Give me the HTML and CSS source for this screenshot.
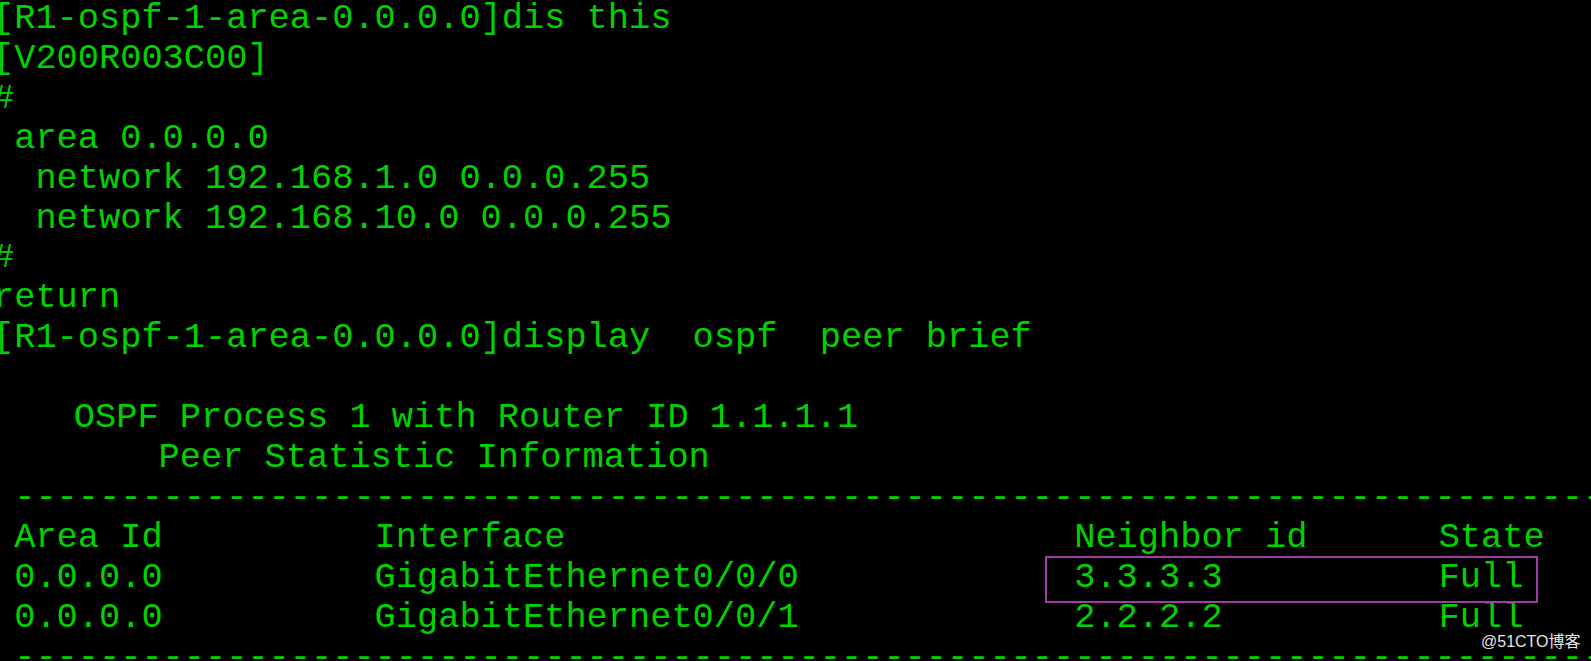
FILE: index.html
```html
<!DOCTYPE html>
<html>
<head>
<meta charset="utf-8">
<link rel="stylesheet" href="styles.css">
</head>
<body>
<div class="screen">
<pre class="term">[R1-ospf-1-area-0.0.0.0]dis this
[V200R003C00]
#
 area 0.0.0.0
  network 192.168.1.0 0.0.0.255
  network 192.168.10.0 0.0.0.255
#
return
[R1-ospf-1-area-0.0.0.0]display  ospf  peer brief

<span class="nudge">    OSPF Process 1 with Router ID 1.1.1.1</span>
<span class="nudge">        Peer Statistic Information</span>
 ----------------------------------------------------------------------------------
 Area Id          Interface                        Neighbor id      <span class="nudge-s">State</span>
 0.0.0.0          GigabitEthernet0/0/0             3.3.3.3          <span class="nudge-s">Full</span>
 0.0.0.0          GigabitEthernet0/0/1             2.2.2.2          <span class="nudge-s">Full</span>
 ----------------------------------------------------------------------------------</pre>
<div class="highlight"></div>
<div class="watermark">@51CTO博客</div>
</div>
</body>
</html>
```
FILE: styles.css
```css
html, body {
  margin: 0;
  padding: 0;
  background: #000;
}
.screen {
  position: relative;
  width: 1591px;
  height: 661px;
  overflow: hidden;
  background: #000;
}
.term {
  margin: 0 0 0 -7px;
  padding: 0;
  font-family: "Liberation Mono", "Courier New", monospace;
  font-size: 35.33px;
  line-height: 39.9px;
  color: #00d200;
  white-space: pre;
}
.nudge {
  margin-left: -4px;
}
.nudge-s {
  margin-left: 4px;
}
.highlight {
  position: absolute;
  left: 1045px;
  top: 556px;
  width: 489px;
  height: 43px;
  border: 2px solid #a03ca6;
}
.watermark {
  position: absolute;
  left: 1481px;
  top: 632px;
  font-family: "Liberation Sans", "Noto Sans CJK SC", sans-serif;
  font-size: 16px;
  line-height: 20px;
  color: #e6e6e6;
  text-shadow: 0 0 2px #000, 1px 1px 1px #000;
}
```
